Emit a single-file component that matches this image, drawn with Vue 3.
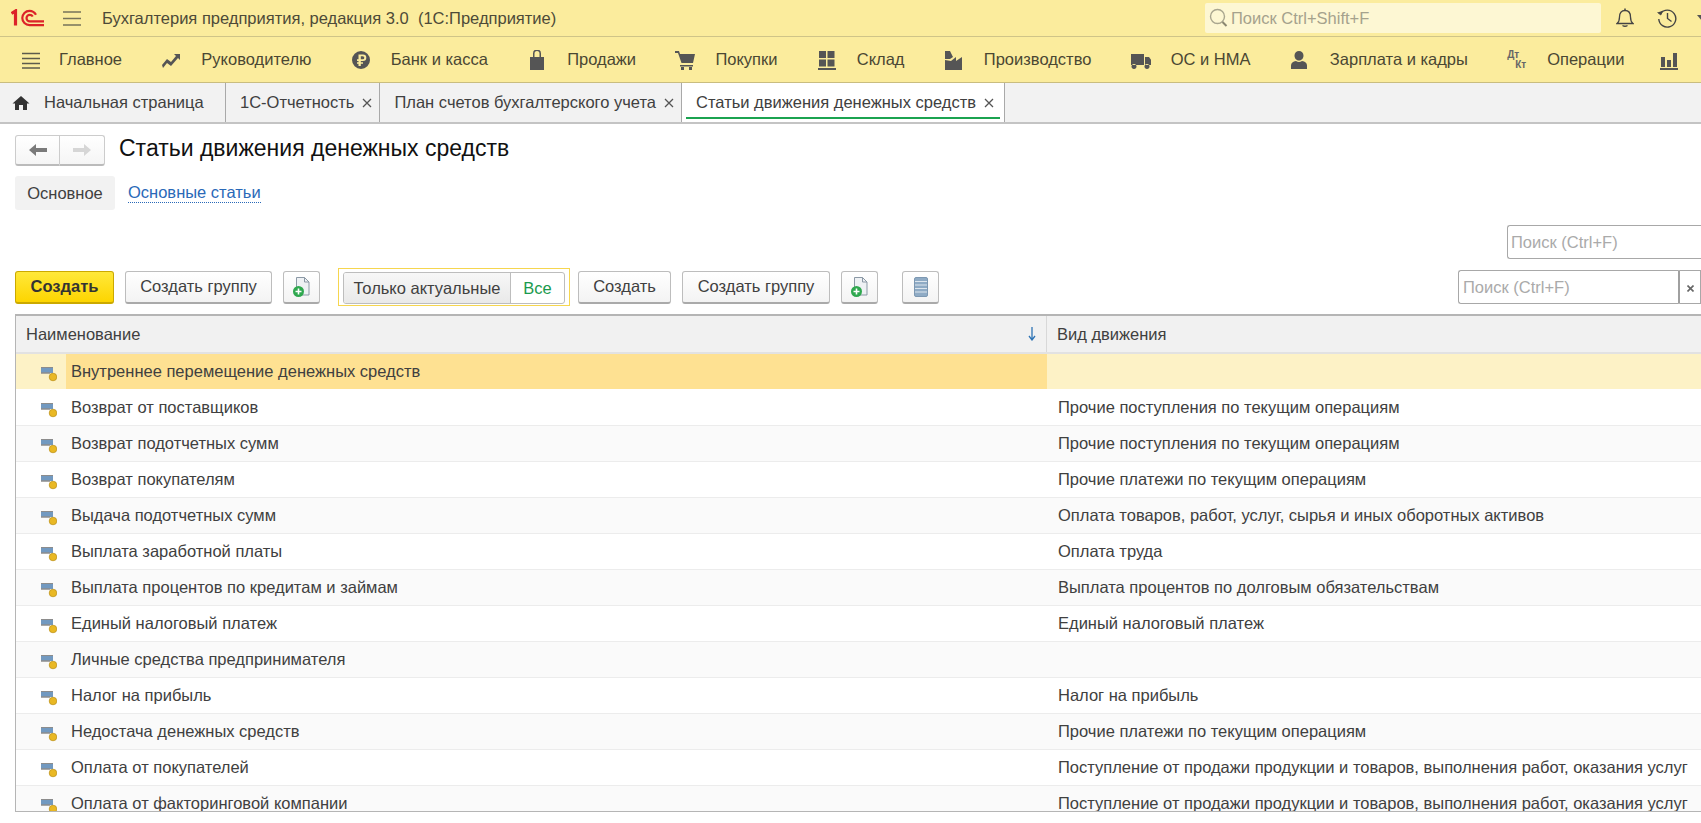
<script setup>
const navItems = [
  { label: 'Руководителю', d: 'M1 15l5-6 4 3 5-6-2-2h6v6l-2-2-7 8-4-3-4 5z' },
  { label: 'Банк и касса', d: 'M10 1a9 9 0 1 0 0 18a9 9 0 0 0 0-18zM7.500 4.500h4.500a3.300 3.300 0 0 1 0 6.600H9.800v1.200H12v1.400H9.800V16H7.500v-2.300H6v-1.400h1.500v-1.200H6V9.300h1.500zM9.800 6.300v3h2a1.500 1.500 0 0 0 0-3z' },
  { label: 'Продажи', d: 'M3 7h3V3.500a4 4 0 0 1 8 0V7h3v13H3zM7.500 7h5V3.500a2.500 2.500 0 0 0-5 0z' },
  { label: 'Покупки', d: 'M0 1h4l1 3h15l-2 9H6.500L3 3H0zM5 15h13v1.500H5zM6 17h3v3H6zM14 17h3v3h-3z' },
  { label: 'Склад', d: 'M2 1h7v7H2zM10.500 1h7v7h-7zM2 9.500h7v7H2zM10.500 9.500h7v7h-7zM1 18h18v2H1z' },
  { label: 'Производство', d: 'M1 1h5l3 6-3 2H1zM1 10l6 1 5-4v4l6-4v13H1z' },
  { label: 'ОС и НМА', d: 'M0 4h13v11H0zM14 7h4l3 4v4h-7zM3 14a2.500 2.500 0 1 0 .01 0zM16 14a2.500 2.500 0 1 0 .01 0z' },
  { label: 'Зарплата и кадры', d: 'M9 1a4.500 4.500 0 0 1 4.500 4.500c0 2.500-1.500 5-4.500 5s-4.500-2.500-4.500-5A4.500 4.500 0 0 1 9 1zM6 11c1.800 1.200 4.200 1.200 6 0 3 .6 5 2 5 4.500V19H1v-3.500C1 13 3 11.600 6 11z' },
  { label: 'Операции', dtkt: true },
  { label: '', d: 'M2 7h4v10H2zM8 10h4v7H8zM14 3h4v14h-4zM1 18h18v2H1z' }
]

const tabs = [
  { label: '1С-Отчетность' },
  { label: 'План счетов бухгалтерского учета' },
  { label: 'Статьи движения денежных средств', active: true }
]

const rows = [
  ['Внутреннее перемещение денежных средств', ''],
  ['Возврат от поставщиков', 'Прочие поступления по текущим операциям'],
  ['Возврат подотчетных сумм', 'Прочие поступления по текущим операциям'],
  ['Возврат покупателям', 'Прочие платежи по текущим операциям'],
  ['Выдача подотчетных сумм', 'Оплата товаров, работ, услуг, сырья и иных оборотных активов'],
  ['Выплата заработной платы', 'Оплата труда'],
  ['Выплата процентов по кредитам и займам', 'Выплата процентов по долговым обязательствам'],
  ['Единый налоговый платеж', 'Единый налоговый платеж'],
  ['Личные средства предпринимателя', ''],
  ['Налог на прибыль', 'Налог на прибыль'],
  ['Недостача денежных средств', 'Прочие платежи по текущим операциям'],
  ['Оплата от покупателей', 'Поступление от продажи продукции и товаров, выполнения работ, оказания услуг'],
  ['Оплата от факторинговой компании', 'Поступление от продажи продукции и товаров, выполнения работ, оказания услуг']
]
</script>

<template>
  <div class="app">
    <header class="topbar">
      <svg class="logo" width="34" height="18" viewBox="0 0 34 18" fill="none" stroke="#dc2329">
        <path d="M0.500 4.500 4.500 2V16.500" stroke-width="3.200" />
        <path d="M33 16.200H18.500a7 7 0 1 1 0-14.400c3 0 5 1.300 6.500 4" stroke-width="2.200" />
        <path d="M33 12.400H18.800a3.200 3.200 0 1 1 0-6.600c1.400 0 2.300.6 3 1.700" stroke-width="2.200" />
      </svg>
      <svg class="burger" width="18" height="15" viewBox="0 0 18 15">
        <path d="M0 1h18M0 7.500h18M0 14h18" stroke="#77735a" stroke-width="1.600" />
      </svg>
      <span class="app-title">Бухгалтерия предприятия, редакция 3.0&nbsp;&nbsp;(1С:Предприятие)</span>
      <div class="global-search">
        <svg width="20" height="22" viewBox="0 0 20 22" fill="none">
          <circle cx="8.500" cy="9.500" r="7" stroke="#a9a68f" stroke-width="1.400" />
          <path d="M13.500 15l4 4" stroke="#8a8771" stroke-width="2" />
        </svg>
        <span>Поиск Ctrl+Shift+F</span>
      </div>
      <svg class="bell" width="18" height="20" viewBox="0 0 18 20" fill="none" stroke="#444">
        <path d="M1 15.500c2-1.500 2.500-3 2.500-6.500C3.500 5 5.500 2.500 9 2.500S14.500 5 14.500 9c0 3.500.5 5 2.500 6.500z" stroke-width="1.300" />
        <path d="M9 0.500v2M6.500 17.500c1.500 1 3.500 1 5 0" stroke-width="1.500" />
      </svg>
      <svg class="history" width="20" height="20" viewBox="0 0 20 20" fill="none" stroke="#444" stroke-width="1.400">
        <path d="M3.500 5.500A8.500 8.500 0 1 1 1.800 11" />
        <path d="M0.500 4.500 3.800 7 5.800 2.800" fill="#444" stroke-width="0.800" />
        <path d="M10.500 5v5.500l4 3" />
      </svg>
      <svg class="chevron" width="10" height="6" viewBox="0 0 10 6"><path d="M0 0h10L5 6z" fill="#555" /></svg>
    </header>

    <nav class="navbar">
      <div class="nav-item">
        <svg class="nav-icon main-icon" width="20" height="20" viewBox="0 0 20 20">
          <path d="M1 3.500h18M1 8.500h18M1 13.500h18M1 18h18" stroke="#5d5b4c" stroke-width="1.500" />
        </svg>
        <span>Главное</span>
      </div>
      <div v-for="item in navItems" :key="item.label" class="nav-item">
        <span v-if="item.dtkt" class="dtkt"><b>Дт</b><b>Кт</b></span>
        <svg v-else class="nav-icon" width="20" height="20" viewBox="0 0 20 20">
          <path :d="item.d" fill="#555" fill-rule="evenodd" />
        </svg>
        <span>{{ item.label }}</span>
      </div>
    </nav>

    <div class="tabs">
      <div class="tab home-tab">
        <svg width="18" height="16" viewBox="0 0 18 16"><path d="M9 1l8.500 7.500H15V15h-4v-5H7v5H3V8.500H.5z" fill="#333" /></svg>
        <span>Начальная страница</span>
      </div>
      <div v-for="tab in tabs" :key="tab.label" class="tab" :class="{ active: tab.active }">
        <span>{{ tab.label }}</span>
        <svg width="10" height="10" viewBox="0 0 10 10"><path d="M1 1l8 8M9 1l-8 8" stroke="#555" stroke-width="1.300" /></svg>
      </div>
    </div>

    <main class="page">
      <div class="page-head">
        <div class="history-nav">
          <button class="hist-btn">
            <svg width="18" height="12" viewBox="0 0 18 12"><path d="M0 6l7-6v4h11v4H7v4z" fill="#7a7a7a" /></svg>
          </button>
          <button class="hist-btn">
            <svg width="18" height="12" viewBox="0 0 18 12"><path d="M18 6l-7-6v4H0v4h11v4z" fill="#d6d6d6" /></svg>
          </button>
        </div>
        <h1>Статьи движения денежных средств</h1>
      </div>

      <div class="sections">
        <span class="section-current">Основное</span>
        <a class="section-link">Основные статьи</a>
      </div>

      <div class="search-row">
        <div class="search-box top-search">Поиск (Ctrl+F)</div>
      </div>

      <div class="toolbar">
        <button class="btn primary">Создать</button>
        <button class="btn group-btn">Создать группу</button>
        <button class="btn icon-btn">
          <svg width="20" height="22" viewBox="0 0 20 22">
            <path d="M4.500 1.500h8l4.500 4.500v13h-12.500z" fill="#eef1f4" stroke="#8b98a5" />
            <path d="M12.500 1.500V6h4.500" fill="none" stroke="#8b98a5" />
            <circle cx="6.500" cy="15.500" r="5.500" fill="#2fa84f" />
            <path d="M3.500 15.500h6M6.500 12.500v6" stroke="#fff" stroke-width="1.600" />
          </svg>
        </button>
        <div class="filter">
          <div class="filter-inner">
            <span class="filter-on">Только актуальные</span>
            <span class="filter-off">Все</span>
          </div>
        </div>
        <button class="btn create-btn">Создать</button>
        <button class="btn group-btn wide">Создать группу</button>
        <button class="btn icon-btn">
          <svg width="20" height="22" viewBox="0 0 20 22">
            <path d="M4.500 1.500h8l4.500 4.500v13h-12.500z" fill="#eef1f4" stroke="#8b98a5" />
            <path d="M12.500 1.500V6h4.500" fill="none" stroke="#8b98a5" />
            <circle cx="6.500" cy="15.500" r="5.500" fill="#2fa84f" />
            <path d="M3.500 15.500h6M6.500 12.500v6" stroke="#fff" stroke-width="1.600" />
          </svg>
        </button>
        <button class="btn icon-btn list-btn">
          <svg width="14" height="20" viewBox="0 0 14 20">
            <rect x="0.500" y="0.500" width="13" height="19" rx="1.500" fill="#8fabc5" stroke="#7d98b2" />
            <path d="M1 4.500h12M1 8h12M1 11.500h12M1 15h12" stroke="#dde6ee" />
          </svg>
        </button>
        <div class="bottom-search">
          <div class="search-box">Поиск (Ctrl+F)</div>
          <button class="search-clear">
            <svg width="7" height="7" viewBox="0 0 7 7"><path d="M.5.5l6 6M6.500.5l-6 6" stroke="#666" stroke-width="1.600" /></svg>
          </button>
        </div>
      </div>

      <section class="table">
        <div class="table-head">
          <div class="col-name">
            <span>Наименование</span>
            <svg width="8" height="14" viewBox="0 0 8 14"><path d="M4 0v12M1 9l3 4 3-4" fill="none" stroke="#2f74b5" stroke-width="1.300" /></svg>
          </div>
          <div class="col-kind">Вид движения</div>
        </div>
        <div v-for="(row, i) in rows" :key="row[0]" class="row" :class="{ selected: i === 0, even: i % 2 === 0 }">
          <div class="row-icon">
            <svg width="17" height="16" viewBox="0 0 17 16">
              <rect x="1" y="1" width="12" height="6" fill="#7299c0" />
              <path d="M1 1.500h12" stroke="#8c8c8c" />
              <path d="M1 7h9" stroke="#8c8c8c" stroke-width="1.500" />
              <circle cx="13" cy="11" r="3.800" fill="#e9b824" stroke="#b98e15" stroke-width="0.700" />
            </svg>
          </div>
          <div class="row-name">{{ row[0] }}</div>
          <div class="row-kind">{{ row[1] }}</div>
        </div>
      </section>
    </main>
  </div>
</template>

<style>
html, body {
  margin: 0;
  overflow: hidden;
  background: #fff;
}
</style>

<style scoped>
.app {
  width: 1701px;
  height: 823px;
  overflow: hidden;
  display: flex;
  flex-direction: column;
  font-family: "Liberation Sans", Arial, sans-serif;
  font-size: 16.5px;
  color: #404040;
}

.topbar {
  height: 36px;
  flex: none;
  display: flex;
  align-items: center;
  background: #fbec9d;
  border-bottom: 1px solid #cfc488;
  padding-left: 11px;
}
.logo { margin-right: 18px; flex: none; }
.burger { margin-right: 21px; flex: none; }
.app-title {
  flex: 1;
  color: #4d4a38;
  white-space: nowrap;
}
.global-search {
  flex: none;
  width: 392px;
  height: 30px;
  display: flex;
  align-items: center;
  gap: 2px;
  padding-left: 4px;
  background: #fdf7d3;
  border-radius: 2px;
  color: #a5a28d;
}
.bell { margin-left: 15px; flex: none; }
.history { margin-left: 23px; flex: none; }
.chevron { margin: 0 -6px 0 20px; flex: none; }

.navbar {
  height: 45px;
  flex: none;
  display: flex;
  align-items: center;
  gap: 39.3px;
  padding-left: 21px;
  background: #fbec9d;
  border-bottom: 1px solid #c9bd7f;
  white-space: nowrap;
  color: #4a4733;
}
.nav-item {
  display: flex;
  align-items: center;
}
.nav-item:last-child { margin-left: -5px; }
.nav-icon {
  flex: none;
  margin-right: 20px;
}
.main-icon { margin-right: 18px; }
.dtkt {
  width: 20px;
  margin-right: 20px;
  display: flex;
  flex-direction: column;
  font-size: 10px;
  line-height: 10px;
  color: #666;
}
.dtkt b:last-child { margin-left: 8px; }

.tabs {
  height: 39px;
  flex: none;
  display: flex;
  background: #f2f2f2;
  border-bottom: 2px solid #c4c4c4;
  white-space: nowrap;
}
.tab {
  display: flex;
  align-items: center;
  gap: 8px;
  padding: 0 7px 0 14px;
  border-right: 1px solid #a9a9a9;
  position: relative;
}
.home-tab {
  gap: 14px;
  width: 226px;
  box-sizing: border-box;
  padding-left: 12px;
}
.tab.active {
  background: #fff;
  padding-right: 10px;
}
.tab.active::after {
  content: "";
  position: absolute;
  left: 4px;
  right: 4px;
  bottom: 3px;
  height: 2px;
  background: #1ba350;
}

.page {
  flex: 1;
  min-height: 0;
  padding-left: 15px;
}
.page-head {
  display: flex;
  align-items: center;
  gap: 14px;
  margin-top: 11px;
}
.history-nav { display: flex; }
.hist-btn {
  width: 45px;
  height: 31px;
  padding: 0;
  display: flex;
  align-items: center;
  justify-content: center;
  background: linear-gradient(#fff, #f5f5f5);
  border: 1px solid #ccc;
  border-bottom: 2px solid #bbb;
  border-radius: 3px 0 0 3px;
}
.hist-btn + .hist-btn {
  border-left: none;
  border-radius: 0 3px 3px 0;
}
h1 {
  margin: 0 0 4px;
  font-size: 23px;
  font-weight: 400;
  color: #111;
}

.sections {
  display: flex;
  align-items: center;
  gap: 13px;
  margin-top: 10px;
}
.section-current {
  width: 100px;
  height: 34px;
  display: flex;
  align-items: center;
  justify-content: center;
  background: #f2f2f2;
  border-radius: 3px;
}
.section-link {
  color: #2a69b8;
  border-bottom: 1px dotted #2a69b8;
}

.search-row {
  display: flex;
  justify-content: flex-end;
  margin-top: 15px;
}
.search-box {
  box-sizing: border-box;
  height: 34px;
  display: flex;
  align-items: center;
  padding-left: 4px;
  background: #fff;
  border: 1px solid #a8a8a8;
  border-radius: 3px 0 0 3px;
  color: #aaa;
}
.top-search {
  width: 194px;
  padding-left: 3px;
  border-right: none;
}

.toolbar {
  display: flex;
  align-items: center;
  gap: 11px;
  margin-top: 10px;
  height: 36px;
}
.btn {
  height: 33px;
  box-sizing: border-box;
  padding: 0;
  font: inherit;
  color: #404040;
  background: linear-gradient(#fff, #f3f3f3);
  border: 1px solid #bdbdbd;
  border-bottom: 2px solid #aaa;
  border-radius: 3px;
  white-space: nowrap;
  flex: none;
}
.btn.primary {
  width: 99px;
  font-weight: 700;
  color: #333;
  background: linear-gradient(#ffe83a, #fdd500);
  border-color: #cba900;
}
.group-btn { width: 147px; }
.group-btn.wide { width: 148px; }
.create-btn { width: 93px; }
.icon-btn {
  width: 37px;
  display: flex;
  align-items: center;
  justify-content: center;
}
.list-btn { margin-left: 13px; }
.filter {
  margin: 0 -3px 0 7px;
  box-sizing: border-box;
  width: 232px;
  height: 38px;
  padding: 3px 4px;
  border: 1px solid #f6d64f;
  flex: none;
}
.filter-inner {
  height: 30px;
  display: flex;
  border: 1px solid #bdbdbd;
  border-radius: 3px;
  overflow: hidden;
}
.filter-on {
  flex: 1;
  display: flex;
  align-items: center;
  justify-content: center;
  background: linear-gradient(#f7f7f7, #e9e9e9);
  border-right: 1px solid #bdbdbd;
  white-space: nowrap;
}
.filter-off {
  width: 53px;
  display: flex;
  align-items: center;
  justify-content: center;
  color: #1a9a4d;
}
.bottom-search {
  margin-left: auto;
  display: flex;
}
.bottom-search .search-box {
  width: 222px;
  border-right: 2px solid #a0a0a0;
}
.search-clear {
  width: 21px;
  height: 34px;
  padding: 0;
  background: #fff;
  border: 1px solid #a8a8a8;
  border-left: none;
}

.table {
  margin-top: 9px;
  height: 498px;
  overflow: hidden;
  box-sizing: border-box;
  border: 1px solid #b5b5b5;
  border-top-width: 2px;
  border-right: none;
}
.table-head {
  height: 36px;
  display: flex;
  background: #f1f1f1;
  border-bottom: 2px solid #e2e2e2;
}
.col-name {
  width: 1031px;
  box-sizing: border-box;
  display: flex;
  align-items: center;
  justify-content: space-between;
  padding: 0 10px;
  border-right: 1px solid #d8d8d8;
}
.col-kind {
  display: flex;
  align-items: center;
  padding-left: 10px;
}
.row {
  height: 36px;
  box-sizing: border-box;
  display: flex;
  align-items: center;
  background: #fff;
  border-bottom: 1px solid #ececec;
  white-space: nowrap;
}
.row.even { background: #fafafa; }
.row-icon {
  width: 50px;
  flex: none;
  align-self: stretch;
  box-sizing: border-box;
  padding: 12px 0 0 24px;
}
.row-icon svg { display: block; }
.row-name {
  width: 981px;
  flex: none;
  align-self: stretch;
  display: flex;
  align-items: center;
  box-sizing: border-box;
  padding-left: 5px;
}
.row-kind {
  flex: 1;
  padding-left: 11px;
}
.row.selected {
  background: #fdf2c6;
  border-bottom-color: #fff;
}
.row.selected .row-name { background: #fee192; }
</style>
